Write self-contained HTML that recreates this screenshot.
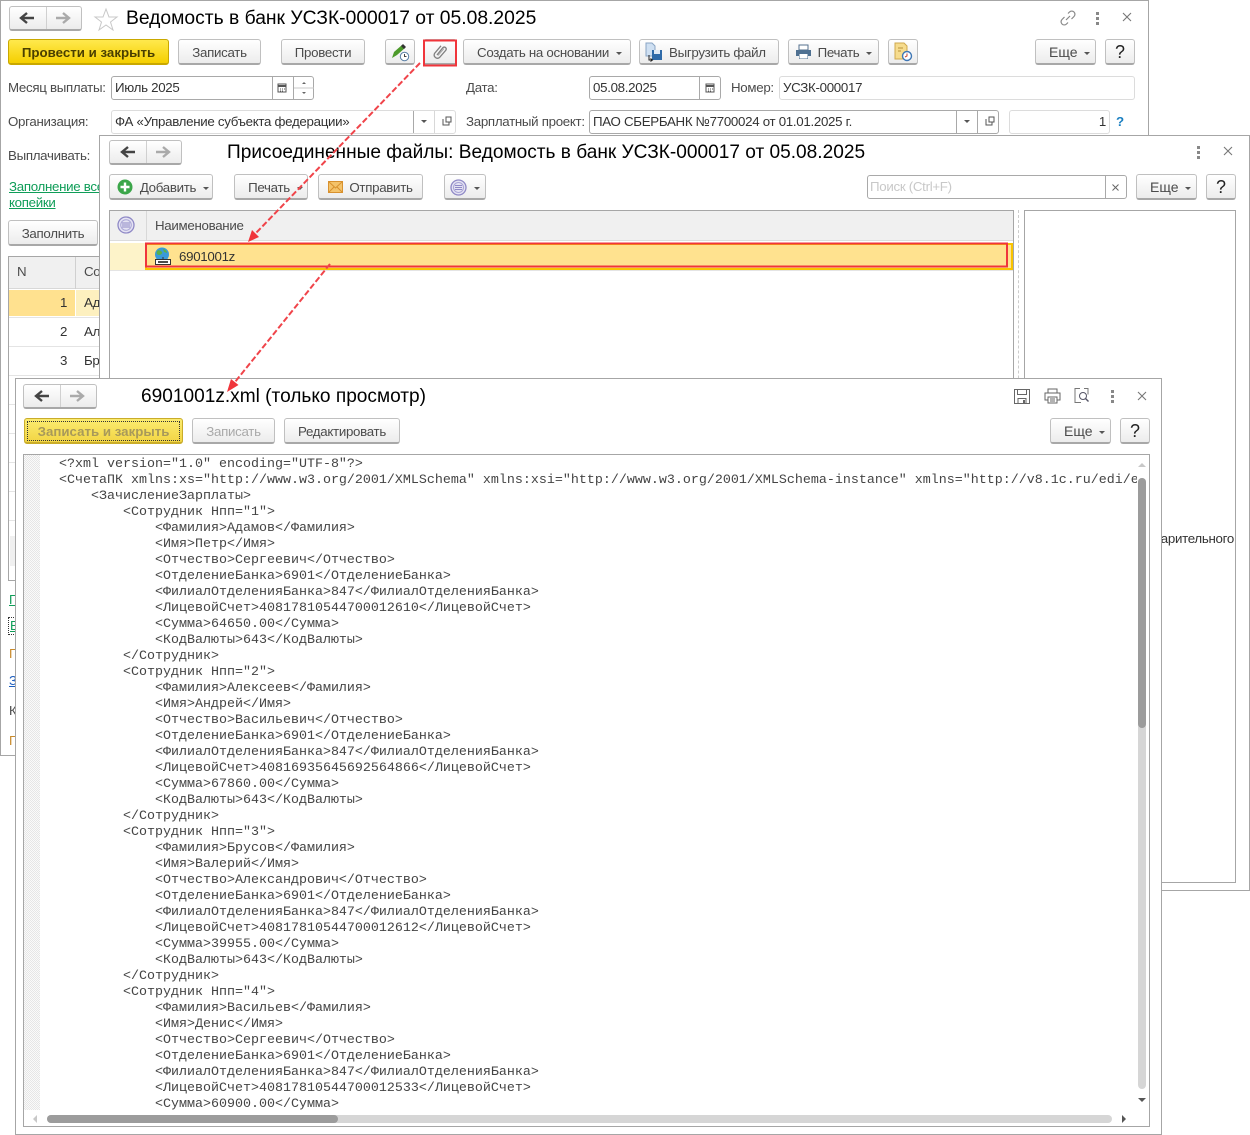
<!DOCTYPE html>
<html lang="ru">
<head>
<meta charset="utf-8">
<title>Ведомость в банк</title>
<style>
html,body{margin:0;padding:0;background:#fff}
body{position:relative;width:1250px;height:1135px;overflow:hidden;font-family:"Liberation Sans","Noto Sans CJK SC",sans-serif;font-size:13.3px;letter-spacing:-.3px;color:#4b4b4b}
.w{position:absolute;box-sizing:border-box;background:#fff;border:1px solid #a6a6a6;overflow:hidden}
.a{position:absolute;box-sizing:border-box}
.t{position:absolute;white-space:nowrap;line-height:16px}
.h{position:absolute;white-space:nowrap;font-size:19.2px;letter-spacing:0;line-height:24px;color:#000}
.b{position:absolute;box-sizing:border-box;height:26px;padding-top:1px;border:1px solid #c0c0c0;border-bottom:2px solid #a8a8a8;border-radius:3px;background:linear-gradient(#fff,#ececec);display:flex;align-items:center;justify-content:center;color:#4b4b4b;white-space:nowrap}
.e{justify-content:flex-start;padding-left:13px;font-size:14px;letter-spacing:0}
.e .c{margin-left:6px}
.q{font-size:18px;letter-spacing:0;color:#222}
.c{display:inline-block;width:0;height:0;border-left:3px solid transparent;border-right:3px solid transparent;border-top:3px solid #555;margin-left:7px;margin-top:2px}
.f{position:absolute;box-sizing:border-box;height:24px;border:1px solid #a9a9a9;border-radius:3px;background:#fff}
.l{border-color:#dcdcdc}
.d{position:absolute;top:0;bottom:0;width:1px;background:#a9a9a9}
.n{position:absolute;box-sizing:border-box;width:73px;height:25px;border:1px solid #c0c0c0;border-bottom:2px solid #a8a8a8;border-radius:3px;background:linear-gradient(#fff,#ececec)}
.n i{position:absolute;left:36px;top:0;bottom:0;width:1px;background:#d0d0d0}
.n svg{position:absolute;left:0;top:0}
.v{position:absolute;width:3px;height:3px;background:#888;box-shadow:0 5px 0 #888,0 10px 0 #888}
svg{display:block}
pre{position:absolute;left:35px;top:0;margin:0;font-family:"Liberation Mono",monospace;font-size:13.33px;letter-spacing:0;line-height:16px;color:#444;white-space:pre}
</style>
</head>
<body>

<!-- ОКНО 1 -->
<div class="w" style="left:0;top:0;width:1149px;height:756px">
  <div class="n" style="left:8px;top:5px"><i></i><svg width="71" height="23"><path d="M24 11H12M17 6l-6 5 6 5" fill="none" stroke="#444" stroke-width="2.400"/><path d="M46 11h12M53 6l6 5-6 5" fill="none" stroke="#aaa" stroke-width="2.400"/></svg></div>
  <svg class="a" style="left:92px;top:6px" width="26" height="24"><path d="M13 2l3 8h8l-6.500 5 2.500 8-7-5-7 5 2.500-8L2 10h8z" fill="#fff" stroke="#c8c8c8"/></svg>
  <div class="h" style="left:125px;top:6px;font-size:19.3px">Ведомость в банк УСЗК-000017 от 05.08.2025</div>
  <svg class="a" style="left:1058px;top:8px" width="18" height="18"><path d="M7 11l4-4M9 4.500l1.500-1.500a3 3 0 0 1 4.500 4.500L12.500 10M5.500 8L3 10.500a3 3 0 0 0 4.500 4.500L9 13.500" fill="none" stroke="#888" stroke-width="1.200"/></svg>
  <div class="v" style="left:1095px;top:11px"></div>
  <svg class="a" style="left:1121px;top:11px" width="10" height="10"><path d="M1 1l8 8M9 1l-8 8" stroke="#777" stroke-width="1.100"/></svg>

  <div class="b" style="left:7px;top:38px;width:161px;background:linear-gradient(#ffe94d,#f5cf00);border-color:#c9a800;color:#4a3f00;font-weight:bold;letter-spacing:0">Провести и закрыть</div>
  <div class="b" style="left:177px;top:38px;width:83px">Записать</div>
  <div class="b" style="left:280px;top:38px;width:84px">Провести</div>
  <div class="b" style="left:384px;top:38px;width:30px"><svg width="22" height="20"><path d="M3 16l2-6 8-7 3 3-8 7z" fill="#4c9a2a"/><path d="M12 4l2-2 3 3-2 2z" fill="#333"/><circle cx="15.500" cy="14.500" r="4.200" fill="#fff" stroke="#5a7fa5"/><path d="M15.500 12v2.500h2" fill="none" stroke="#444"/></svg></div>
  <div class="b" style="left:422px;top:38px;width:34px"><svg width="18" height="18"><path d="M5 12l6-7.500a2 2 0 0 1 3 2.500L7.500 14.500a3.300 3.300 0 0 1-5-4L9 2.800" transform="translate(1 0)" fill="none" stroke="#808080" stroke-width="1.300"/><path d="M7 12.500l6-7" fill="none" stroke="#aaa"/></svg></div>
  <div class="b" style="left:462px;top:38px;width:168px;padding-left:5px">Создать на основании<span class="c"></span></div>
  <div class="b" style="left:638px;top:38px;width:140px;justify-content:flex-start;padding-left:3px"><svg width="22" height="20" style="margin-right:4px"><path d="M3 1h6l3 3v10H3z" fill="#cfe0f2" stroke="#8aa5c4"/><path d="M9 8h10v10H9z" fill="#2e6aa8"/><path d="M11 8h6v4h-6z" fill="#dfe9f5"/><path d="M6 13v5h3M7.500 16.500L9.500 18l-2 1.500" fill="none" stroke="#222"/></svg>Выгрузить файл</div>
  <div class="b" style="left:787px;top:38px;width:91px"><svg width="17" height="16" style="margin-right:6px"><path d="M4 1h9v5H4z" fill="#fff" stroke="#54708e"/><path d="M1 6h15v6h-3v3H4v-3H1z" fill="#4f7192"/><path d="M4.500 10h8v4.500h-8z" fill="#fff"/></svg>Печать<span class="c"></span></div>
  <div class="b" style="left:887px;top:38px;width:30px"><svg width="20" height="20"><path d="M2 1h9l3 3v13H2z" fill="#f6dc8e" stroke="#cfa94f"/><path d="M5 6h5M5 9h3" stroke="#b8923a"/><circle cx="14" cy="14" r="4.500" fill="#fff" stroke="#3f77b5" stroke-width="1.400"/><path d="M14 11.500V14l-2 1" fill="none" stroke="#c9452e"/></svg></div>
  <div class="b e" style="left:1034px;top:38px;width:61px">Еще<span class="c"></span></div>
  <div class="b q" style="left:1104px;top:38px;width:30px">?</div>

  <div class="t" style="left:7px;top:79px">Месяц выплаты:</div>
  <div class="f" style="left:110px;top:75px;width:203px"><span class="t" style="left:3px;top:3px;color:#333">Июль 2025</span><i class="d" style="left:160px"></i><i class="d" style="left:181px"></i>
    <svg class="a" style="left:165px;top:5px" width="10" height="11"><path d="M1 2h8v8H1z" fill="#fff" stroke="#555"/><path d="M1 3h8v2H1z" fill="#555"/><path d="M3 7h1M5 7h1M7 7h1M3 9h1M5 9h1" stroke="#555"/></svg>
    <svg class="a" style="left:182px;top:0" width="20" height="22"><path d="M0 11h20" stroke="#c8c8c8"/><path d="M8 7l2-2 2 2z" fill="#666"/><path d="M8 15l2 2 2-2z" fill="#666"/></svg></div>
  <div class="t" style="left:465px;top:79px">Дата:</div>
  <div class="f" style="left:588px;top:75px;width:132px"><span class="t" style="left:3px;top:3px;color:#333">05.08.2025</span><i class="d" style="left:109px"></i>
    <svg class="a" style="left:115px;top:5px" width="10" height="11"><path d="M1 2h8v8H1z" fill="#fff" stroke="#555"/><path d="M1 3h8v2H1z" fill="#555"/><path d="M3 7h1M5 7h1M7 7h1M3 9h1M5 9h1" stroke="#555"/></svg></div>
  <div class="t" style="left:730px;top:79px">Номер:</div>
  <div class="f l" style="left:778px;top:75px;width:356px"><span class="t" style="left:3px;top:3px;color:#333">УСЗК-000017</span></div>

  <div class="t" style="left:7px;top:113px">Организация:</div>
  <div class="f l" style="left:110px;top:109px;width:345px"><span class="t" style="left:3px;top:3px;color:#333">ФА «Управление субъекта федерации»</span><i class="d" style="left:301px"></i><i class="d" style="left:322px;background:#d8d8d8"></i>
    <svg class="a" style="left:302px;top:0" width="42" height="22"><path d="M7 9h6l-3 3z" fill="#555"/><path d="M29 8v6h6V11M32 6h5v5h-5z" fill="none" stroke="#555"/></svg></div>
  <div class="t" style="left:465px;top:113px">Зарплатный проект:</div>
  <div class="f" style="left:588px;top:109px;width:410px"><span class="t" style="left:3px;top:3px;color:#333">ПАО СБЕРБАНК №7700024 от 01.01.2025 г.</span><i class="d" style="left:366px"></i><i class="d" style="left:387px"></i>
    <svg class="a" style="left:367px;top:0" width="42" height="22"><path d="M7 9h6l-3 3z" fill="#555"/><path d="M29 8v6h6V11M32 6h5v5h-5z" fill="none" stroke="#555"/></svg></div>
  <div class="f l" style="left:1008px;top:109px;width:101px"><span class="t" style="right:3px;top:3px;color:#333">1</span></div>
  <div class="t" style="left:1115px;top:113px;color:#1a7fc1;font-weight:bold">?</div>

  <div class="t" style="left:7px;top:147px">Выплачивать:</div>
  <div class="t" style="left:8px;top:178px;color:#0f9d58;text-decoration:underline">Заполнение всех</div>
  <div class="t" style="left:8px;top:194px;color:#0f9d58;text-decoration:underline">копейки</div>
  <div class="b" style="left:7px;top:219px;width:90px">Заполнить</div>

  <div class="a" style="left:7px;top:255px;width:120px;height:325px;border:1px solid #a6a6a6;background:#fff">
    <div class="a" style="left:0;top:0;width:120px;height:32px;background:#f0f0f0;border-bottom:1px solid #d8d8d8"></div>
    <div class="a" style="left:66px;top:0;width:1px;height:32px;background:#d0d0d0"></div>
    <div class="a" style="left:0;top:33px;width:66px;height:26px;background:#ffe18f"></div>
    <div class="a" style="left:67px;top:33px;width:60px;height:26px;background:#fdf0bf"></div>
    <div class="a" style="left:0;top:60px;width:120px;height:1px;background:#e4e4e4"></div>
    <div class="a" style="left:0;top:89px;width:120px;height:1px;background:#e4e4e4"></div>
    <div class="a" style="left:0;top:118px;width:120px;height:1px;background:#e4e4e4"></div>
    <div class="a" style="left:0;top:147px;width:120px;height:1px;background:#e4e4e4"></div>
    <div class="a" style="left:0;top:176px;width:120px;height:1px;background:#e4e4e4"></div>
    <div class="a" style="left:0;top:205px;width:120px;height:1px;background:#e4e4e4"></div>
    <div class="a" style="left:0;top:234px;width:120px;height:1px;background:#e4e4e4"></div>
    <div class="a" style="left:0;top:263px;width:120px;height:1px;background:#e4e4e4"></div>
    <div class="a" style="left:1px;top:279px;width:120px;height:30px;background:#f0f0f0"></div>
    <span class="t" style="left:8px;top:7px">N</span>
    <span class="t" style="left:75px;top:7px">Сотрудник</span>
    <span class="t" style="left:51px;top:38px;color:#333">1</span><span class="t" style="left:75px;top:38px;color:#333">Адамов</span>
    <span class="t" style="left:51px;top:67px;color:#333">2</span><span class="t" style="left:75px;top:67px;color:#333">Алексеев</span>
    <span class="t" style="left:51px;top:96px;color:#333">3</span><span class="t" style="left:75px;top:96px;color:#333">Брусов</span>
  </div>
  <div class="t" style="left:8px;top:591px;color:#0f9d58;text-decoration:underline">Платежи</div>
  <div class="a" style="left:7px;top:616px;width:20px;height:18px;border:1px dotted #333"></div>
  <div class="t" style="left:9px;top:617px;color:#0f9d58;text-decoration:underline">Ведомость</div>
  <div class="t" style="left:8px;top:645px;color:#c98a2b">Подписи</div>
  <div class="t" style="left:8px;top:672px;color:#1f5fbf;text-decoration:underline">Зарплата</div>
  <div class="t" style="left:8px;top:702px">Комментарий</div>
  <div class="t" style="left:8px;top:732px;color:#c98a2b">Подпись</div>
</div>

<!-- ОКНО 2 -->
<div class="w" style="left:99px;top:135px;width:1151px;height:756px">
  <div class="n" style="left:9px;top:4px"><i></i><svg width="71" height="23"><path d="M25 11H13M18 6l-6 5 6 5" fill="none" stroke="#444" stroke-width="2.400"/><path d="M46 11h12M53 6l6 5-6 5" fill="none" stroke="#aaa" stroke-width="2.400"/></svg></div>
  <div class="h" style="left:127px;top:5px;font-size:19.1px">Присоединенные файлы: Ведомость в банк УСЗК-000017 от 05.08.2025</div>
  <div class="v" style="left:1097px;top:10px"></div>
  <svg class="a" style="left:1123px;top:10px" width="10" height="10"><path d="M1 1l8 8M9 1l-8 8" stroke="#777" stroke-width="1.100"/></svg>

  <div class="b" style="left:9px;top:38px;width:104px;padding-left:4px"><svg width="16" height="16" style="margin-right:7px"><circle cx="8" cy="8" r="7.500" fill="#3ba64a"/><path d="M8 3.500v9M3.500 8h9" stroke="#fff" stroke-width="2.400"/></svg>Добавить<span class="c"></span></div>
  <div class="b" style="left:134px;top:38px;width:74px;padding-left:9px">Печать<span class="c"></span></div>
  <div class="b" style="left:218px;top:38px;width:105px"><svg width="15" height="12" style="margin-right:6px"><path d="M.5.500h14v11H.5z" fill="#f4c36a" stroke="#d8912e"/><path d="M.5.500L7.500 7l7-6.500M.5 11.500L6 6M14.500 11.500L9 6" fill="none" stroke="#d8912e"/></svg>Отправить</div>
  <div class="b" style="left:344px;top:38px;width:42px"><svg width="17" height="17"><circle cx="8.500" cy="8.500" r="7.500" fill="#e5e3f3" stroke="#8f89c6" stroke-width="1.300"/><circle cx="8.500" cy="8.500" r="5" fill="none" stroke="#aaa6d6"/><path d="M5 6.500h7M5 8.500h7M5 10.500h7" stroke="#8f89c6"/></svg><span class="c"></span></div>
  <div class="f" style="left:767px;top:39px;width:260px"><span class="t" style="left:2px;top:3px;color:#c8c8c8">Поиск (Ctrl+F)</span><i class="d" style="left:237px"></i><svg class="a" style="left:244px;top:8px" width="7" height="7"><path d="M.5.500l6 6M6.500.500l-6 6" stroke="#666"/></svg></div>
  <div class="b e" style="left:1036px;top:38px;width:61px">Еще<span class="c"></span></div>
  <div class="b q" style="left:1106px;top:38px;width:30px">?</div>

  <div class="a" style="left:9px;top:74px;width:905px;height:600px;border:1px solid #a6a6a6">
    <div class="a" style="left:0;top:0;width:903px;height:30px;background:#f0f0f0;border-bottom:1px solid #dcdcdc"></div>
    <div class="a" style="left:36px;top:0;width:1px;height:30px;background:#d8d8d8"></div>
    <svg class="a" style="left:7px;top:5px" width="18" height="18"><circle cx="9" cy="9" r="8" fill="#e5e3f3" stroke="#8f89c6" stroke-width="1.300"/><circle cx="9" cy="9" r="5.300" fill="none" stroke="#aaa6d6"/><path d="M5 7h8M5 9h8M5 11h8" stroke="#8f89c6"/></svg>
    <span class="t" style="left:45px;top:7px">Наименование</span>
    <div class="a" style="left:0;top:32px;width:35px;height:27px;background:#fdf3c9"></div>
    <div class="a" style="left:35px;top:32px;width:868px;height:27px;background:#ffe28f;border:2px solid #f9c400"></div>
    <div class="a" style="left:0;top:59px;width:903px;height:1px;background:#e4e4e4"></div>
    <svg class="a" style="left:44px;top:36px" width="18" height="19"><circle cx="8" cy="7.500" r="7" fill="#3a9ad9"/><path d="M3 4c2-2 4 0 5 1s-1 3-3 3-3-2-2-4zM9 2c2 0 4 2 4 4l-3-1z" fill="#5ab04a"/><path d="M1.500 12.500h15v5h-15z" fill="#fff" stroke="#333"/><path d="M4 15h10" stroke="#111" stroke-width="1.500"/><path d="M9 10v3" stroke="#333"/></svg>
    <span class="t" style="left:69px;top:38px;color:#333">6901001z</span>
  </div>
  <div class="a" style="left:918px;top:74px;width:1px;height:600px;border-left:1px dashed #ccc"></div>
  <div class="a" style="left:924px;top:74px;width:212px;height:673px;border:1px solid #a6a6a6"></div>
  <div class="t" style="right:15px;top:395px;color:#333">предварительного</div>
</div>

<!-- ОКНО 3 -->
<div class="w" style="left:15px;top:378px;width:1147px;height:757px">
  <div class="n" style="left:7px;top:5px;width:74px"><i></i><svg width="72" height="23"><path d="M25 11H13M18 6l-6 5 6 5" fill="none" stroke="#444" stroke-width="2.400"/><path d="M46 11h12M53 6l6 5-6 5" fill="none" stroke="#aaa" stroke-width="2.400"/></svg></div>
  <div class="h" style="left:125px;top:6px;font-size:19.1px">6901001z.xml (только просмотр)</div>
  <svg class="a" style="left:998px;top:10px" width="16" height="15"><path d="M.5.500h15v14H.5z" fill="#fff" stroke="#666"/><path d="M3.500.500v5h9v-5M4 14.500V9.500h8v5" fill="none" stroke="#666"/><path d="M9 11h2v3H9z" fill="#666"/></svg>
  <svg class="a" style="left:1028px;top:9px" width="17" height="16"><path d="M4 5V1h9v4M4 12H1V5h15v7h-3" fill="#fff" stroke="#666"/><path d="M4 9h9v6H4z" fill="#fff" stroke="#666"/><path d="M6 11h5M6 13h5" stroke="#666"/></svg>
  <svg class="a" style="left:1058px;top:9px" width="16" height="16"><path d="M6 .500H1v14h6M10 .500h4v6" fill="none" stroke="#777"/><circle cx="9" cy="8" r="3.500" fill="none" stroke="#556"/><path d="M11.500 10.500l3 3" stroke="#556" stroke-width="1.400"/></svg>
  <div class="v" style="left:1095px;top:11px"></div>
  <svg class="a" style="left:1121px;top:12px" width="10" height="10"><path d="M1 1l8 8M9 1l-8 8" stroke="#777" stroke-width="1.100"/></svg>

  <div class="b" style="left:8px;top:39px;width:159px;background:linear-gradient(#fbec70,#f2d544);border-color:#c9ac2a;color:#a8995a;font-weight:bold;letter-spacing:0;outline:1px dotted #333;outline-offset:-4px">Записать и закрыть</div>
  <div class="b" style="left:176px;top:39px;width:83px;color:#a9a9a9">Записать</div>
  <div class="b" style="left:268px;top:39px;width:116px">Редактировать</div>
  <div class="b e" style="left:1034px;top:39px;width:61px">Еще<span class="c"></span></div>
  <div class="b q" style="left:1104px;top:39px;width:30px">?</div>

  <div class="a" style="left:7px;top:75px;width:1127px;height:673px;border:1px solid #a6a6a6;overflow:hidden">
    <div class="a" style="left:0;top:0;width:16px;height:655px;background:repeating-conic-gradient(#e6e6e6 0 25%,#fafafa 0 50%) 0 0/2px 2px"></div>
    <div class="a" style="left:0;top:0;width:1113px;height:655px;overflow:hidden">
<pre style="top:0;transform:translateY(2px)">&lt;?xml version="1.0" encoding="UTF-8"?&gt;
&lt;СчетаПК xmlns:xs="http://www.w3.org/2001/XMLSchema" xmlns:xsi="http://www.w3.org/2001/XMLSchema-instance" xmlns="http://v8.1c.ru/edi/edi_stnd/Zarplata"&gt;
    &lt;ЗачислениеЗарплаты&gt;
        &lt;Сотрудник Нпп="1"&gt;
            &lt;Фамилия&gt;Адамов&lt;/Фамилия&gt;
            &lt;Имя&gt;Петр&lt;/Имя&gt;
            &lt;Отчество&gt;Сергеевич&lt;/Отчество&gt;
            &lt;ОтделениеБанка&gt;6901&lt;/ОтделениеБанка&gt;
            &lt;ФилиалОтделенияБанка&gt;847&lt;/ФилиалОтделенияБанка&gt;
            &lt;ЛицевойСчет&gt;40817810544700012610&lt;/ЛицевойСчет&gt;
            &lt;Сумма&gt;64650.00&lt;/Сумма&gt;
            &lt;КодВалюты&gt;643&lt;/КодВалюты&gt;
        &lt;/Сотрудник&gt;
        &lt;Сотрудник Нпп="2"&gt;
            &lt;Фамилия&gt;Алексеев&lt;/Фамилия&gt;
            &lt;Имя&gt;Андрей&lt;/Имя&gt;
            &lt;Отчество&gt;Васильевич&lt;/Отчество&gt;
            &lt;ОтделениеБанка&gt;6901&lt;/ОтделениеБанка&gt;
            &lt;ФилиалОтделенияБанка&gt;847&lt;/ФилиалОтделенияБанка&gt;
            &lt;ЛицевойСчет&gt;40816935645692564866&lt;/ЛицевойСчет&gt;
            &lt;Сумма&gt;67860.00&lt;/Сумма&gt;
            &lt;КодВалюты&gt;643&lt;/КодВалюты&gt;
        &lt;/Сотрудник&gt;
        &lt;Сотрудник Нпп="3"&gt;
            &lt;Фамилия&gt;Брусов&lt;/Фамилия&gt;
            &lt;Имя&gt;Валерий&lt;/Имя&gt;
            &lt;Отчество&gt;Александрович&lt;/Отчество&gt;
            &lt;ОтделениеБанка&gt;6901&lt;/ОтделениеБанка&gt;
            &lt;ФилиалОтделенияБанка&gt;847&lt;/ФилиалОтделенияБанка&gt;
            &lt;ЛицевойСчет&gt;40817810544700012612&lt;/ЛицевойСчет&gt;
            &lt;Сумма&gt;39955.00&lt;/Сумма&gt;
            &lt;КодВалюты&gt;643&lt;/КодВалюты&gt;
        &lt;/Сотрудник&gt;
        &lt;Сотрудник Нпп="4"&gt;
            &lt;Фамилия&gt;Васильев&lt;/Фамилия&gt;
            &lt;Имя&gt;Денис&lt;/Имя&gt;
            &lt;Отчество&gt;Сергеевич&lt;/Отчество&gt;
            &lt;ОтделениеБанка&gt;6901&lt;/ОтделениеБанка&gt;
            &lt;ФилиалОтделенияБанка&gt;847&lt;/ФилиалОтделенияБанка&gt;
            &lt;ЛицевойСчет&gt;40817810544700012533&lt;/ЛицевойСчет&gt;
            &lt;Сумма&gt;60900.00&lt;/Сумма&gt;</pre>
    </div>
    <!-- вертикальная прокрутка -->
    <div class="a" style="left:1114px;top:23px;width:8px;height:611px;background:#d6d6d6;border-radius:4px"></div>
    <div class="a" style="left:1114px;top:23px;width:8px;height:250px;background:#9c9c9c;border-radius:4px"></div>
    <svg class="a" style="left:1114px;top:7px" width="8" height="6"><path d="M0 5l4-4 4 4z" fill="#c8c8c8"/></svg>
    <svg class="a" style="left:1114px;top:642px" width="8" height="6"><path d="M0 1l4 4 4-4z" fill="#555"/></svg>
    <!-- горизонтальная прокрутка -->
    <div class="a" style="left:23px;top:660px;width:1065px;height:8px;background:#d6d6d6;border-radius:4px"></div>
    <div class="a" style="left:23px;top:660px;width:291px;height:8px;background:#9c9c9c;border-radius:4px"></div>
    <svg class="a" style="left:8px;top:660px" width="6" height="8"><path d="M5 0L1 4l4 4z" fill="#c8c8c8"/></svg>
    <svg class="a" style="left:1097px;top:660px" width="6" height="8"><path d="M1 0l4 4-4 4z" fill="#555"/></svg>
  </div>
</div>

<!-- Пояснительная разметка -->
<svg class="a" style="left:0;top:0;pointer-events:none" width="1250" height="1135">
  <rect x="424" y="40.500" width="32" height="25" fill="none" stroke="#f0353b" stroke-width="2"/>
  <rect x="146" y="243.500" width="861" height="23" fill="none" stroke="#f0353b" stroke-width="2"/>
  <path d="M420 63L256 233" fill="none" stroke="#f0444a" stroke-width="2" stroke-dasharray="6 2.500"/>
  <path d="M248 242l4-12 7 7z" fill="#f0353b"/>
  <path d="M330 264L235 382" fill="none" stroke="#f0444a" stroke-width="2" stroke-dasharray="6 2.500"/>
  <path d="M227 392l4-13 7.500 6z" fill="#f0353b"/>
</svg>
</body>
</html>
